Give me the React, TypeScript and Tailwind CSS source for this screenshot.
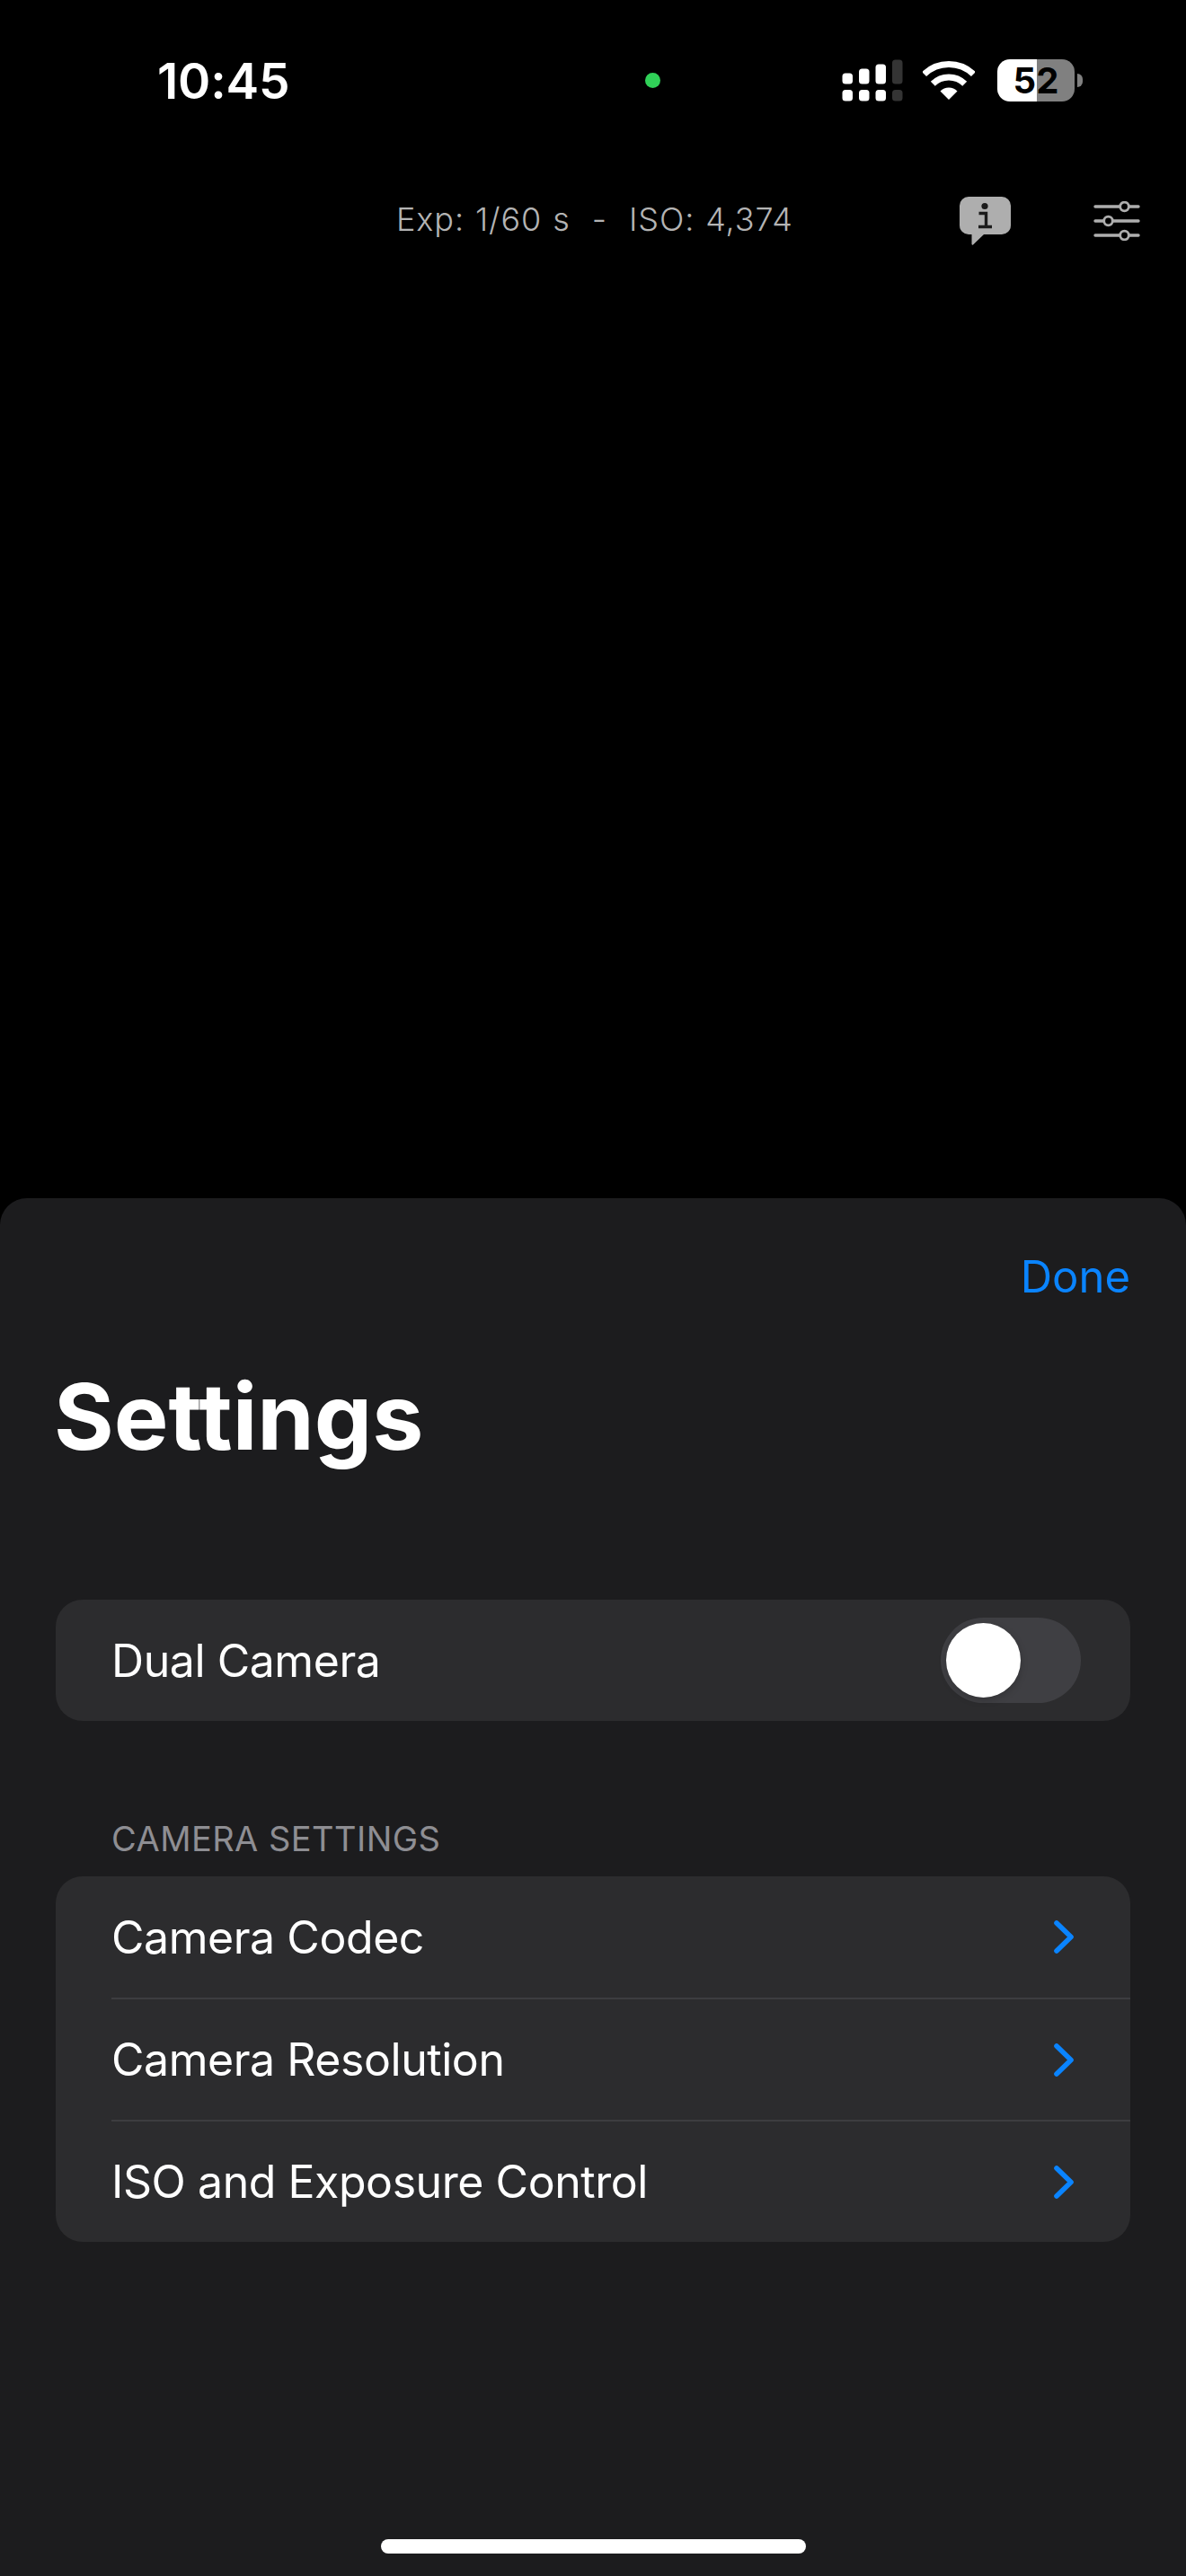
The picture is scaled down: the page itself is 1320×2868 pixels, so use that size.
// Camera screen with the settings sheet open

function SignalIcon() {
  return (
    <svg width="68" height="47" viewBox="0 0 68 47" className="block">
      <g fill="#ffffff">
        <rect x="0.5" y="15.5" width="11.5" height="12" rx="3.5" />
        <rect x="19" y="10.5" width="11.5" height="17" rx="3.5" />
        <rect x="37.5" y="5.5" width="11.5" height="22" rx="3.5" />
        <rect x="0.5" y="34" width="11.5" height="12.5" rx="3.5" />
        <rect x="19" y="34" width="11.5" height="12.5" rx="3.5" />
        <rect x="37.5" y="34" width="11.5" height="12.5" rx="3.5" />
      </g>
      <g fill="#343434">
        <rect x="56" y="0.5" width="11.5" height="27" rx="3.5" />
        <rect x="56" y="34" width="11.5" height="12.5" rx="3.5" />
      </g>
    </svg>
  );
}

function WifiIcon() {
  return (
    <svg width="58" height="43" viewBox="0 0 58 43" className="block">
      <path d="M1.6 14.6A39.5 39.5 0 0 1 56.4 14.6" fill="none" stroke="#ffffff" strokeWidth="7" />
      <path d="M11.3 25.3A25 25 0 0 1 46.7 25.3" fill="none" stroke="#ffffff" strokeWidth="7" />
      <path d="M29 43L19.5 33.5A13.5 13.5 0 0 1 38.5 33.5Z" fill="#ffffff" />
    </svg>
  );
}

function BatteryIcon() {
  return (
    <div className="ml-[3px] flex items-center gap-[3px]">
      <div className="relative flex h-[47px] w-[86px] overflow-hidden rounded-[14px]">
        <div className="w-[44px] bg-white" />
        <div className="flex-1 bg-[#808080]" />
        <span className="absolute inset-0 flex items-center justify-center text-[40px] leading-none font-bold text-black">
          52
        </span>
      </div>
      <div className="h-[15px] w-[6px] rounded-r-full bg-[#808080]" />
    </div>
  );
}

function InfoBubbleIcon() {
  return (
    <svg width="57" height="54" viewBox="0 0 57 54" className="block">
      <path
        d="M10 0H47A10 10 0 0 1 57 10V32A10 10 0 0 1 47 42H27L15 53.5C14 54 13.5 53.5 13.5 52.5V42H10A10 10 0 0 1 0 32V10A10 10 0 0 1 10 0Z"
        fill="#aeaeae"
      />
      <circle cx="28" cy="10.5" r="3.6" fill="#1c1c1c" />
      <path
        d="M21.5 18.5H29.5V33M21 33.5H36"
        fill="none"
        stroke="#1c1c1c"
        strokeWidth="3.4"
      />
    </svg>
  );
}

function SlidersIcon() {
  return (
    <svg width="52" height="44" viewBox="0 0 52 44" fill="none" stroke="#aeaeae" className="block">
      <g strokeWidth="3.4" strokeLinecap="round">
        <path d="M2 6H29M40 6H50" />
        <path d="M2 22H11M22 22H50" />
        <path d="M2 38H29M40 38H50" />
      </g>
      <g strokeWidth="2.8">
        <circle cx="34.5" cy="6" r="4.8" />
        <circle cx="16.5" cy="22" r="4.8" />
        <circle cx="34.5" cy="38" r="4.8" />
      </g>
    </svg>
  );
}

function Chevron() {
  return (
    <svg width="22" height="37" viewBox="0 0 22 37" fill="none" className="block">
      <path
        d="M3 3L19 18.5L3 34"
        stroke="#0a84ff"
        strokeWidth="5.6"
        strokeLinecap="round"
        strokeLinejoin="round"
      />
    </svg>
  );
}

const cameraRows = ['Camera Codec', 'Camera Resolution', 'ISO and Exposure Control'];

export default function App() {
  return (
    <div className="flex h-[2868px] w-[1320px] flex-col overflow-hidden bg-black font-['Inter',sans-serif] text-white">
      {/* Status bar */}
      <div className="flex items-center pt-[65px] pl-[175px]">
        <span className="mt-[2px] w-[145px] text-[55px] leading-[47px] font-semibold tracking-[-0.2px]">10:45</span>
        <div className="ml-[398px] h-[17px] w-[17px] rounded-full bg-[#30d158]" />
        <div className="ml-[202px] flex items-center gap-[22px]">
          <SignalIcon />
          <WifiIcon />
          <BatteryIcon />
        </div>
      </div>

      {/* Exposure readout */}
      <div className="flex items-start pt-[105px] pl-[441px]">
        <span className="mt-[3px] mb-[2px] w-[627px] text-[36px] leading-[44px] font-light tracking-[0.9px] [word-spacing:1px] whitespace-pre text-[#b4b4b4]">
          {'Exp: 1/60 s  -  ISO: 4,374'}
        </span>
        <InfoBubbleIcon />
        <div className="mt-[5px] ml-[92px]">
          <SlidersIcon />
        </div>
      </div>

      <div className="flex-1" />

      {/* Settings sheet */}
      <div className="flex h-[1534px] flex-col rounded-t-[30px] bg-[#1c1c1e] px-[62px]">
        <div className="flex justify-end pt-[58px]">
          <span className="text-[49px] leading-[60px] text-[#0a84ff]">Done</span>
        </div>
        <h1 className="mt-[63px] ml-[-2px] text-[102px] leading-[124px] font-bold">Settings</h1>

        <div className="mt-[142px] flex h-[135px] items-center justify-between rounded-[30px] bg-[#2c2c2e] pr-[55px] pl-[62px]">
          <span className="text-[50px] leading-[60px] tracking-[-0.45px]">Dual Camera</span>
          <div className="flex h-[95px] w-[156px] items-center rounded-full bg-[#3f3f43] pl-[6px]">
            <div className="h-[83px] w-[83px] rounded-full bg-white shadow-[0_3px_8px_rgba(0,0,0,0.2)]" />
          </div>
        </div>

        <div className="mt-[108px] pl-[62px] text-[38px] leading-[46px] tracking-[0.45px] text-[#8e8e93]">CAMERA SETTINGS</div>

        <div className="mt-[19px] rounded-[30px] bg-[#2c2c2e]">
          {cameraRows.map((label, i) => (
            <div key={label} className="pl-[62px]">
              <div
                className={
                  i === 0
                    ? 'flex h-[135px] items-center justify-between pr-[63px]'
                    : 'flex h-[136px] items-center justify-between border-t-2 border-[#3d3d40] pr-[63px]'
                }
              >
                <span className="text-[50px] leading-[60px] tracking-[-0.45px]">{label}</span>
                <Chevron />
              </div>
            </div>
          ))}
        </div>

        <div className="flex-1" />
        <div className="mb-[25px] flex justify-center">
          <div className="h-[16px] w-[473px] rounded-full bg-white" />
        </div>
      </div>
    </div>
  );
}
